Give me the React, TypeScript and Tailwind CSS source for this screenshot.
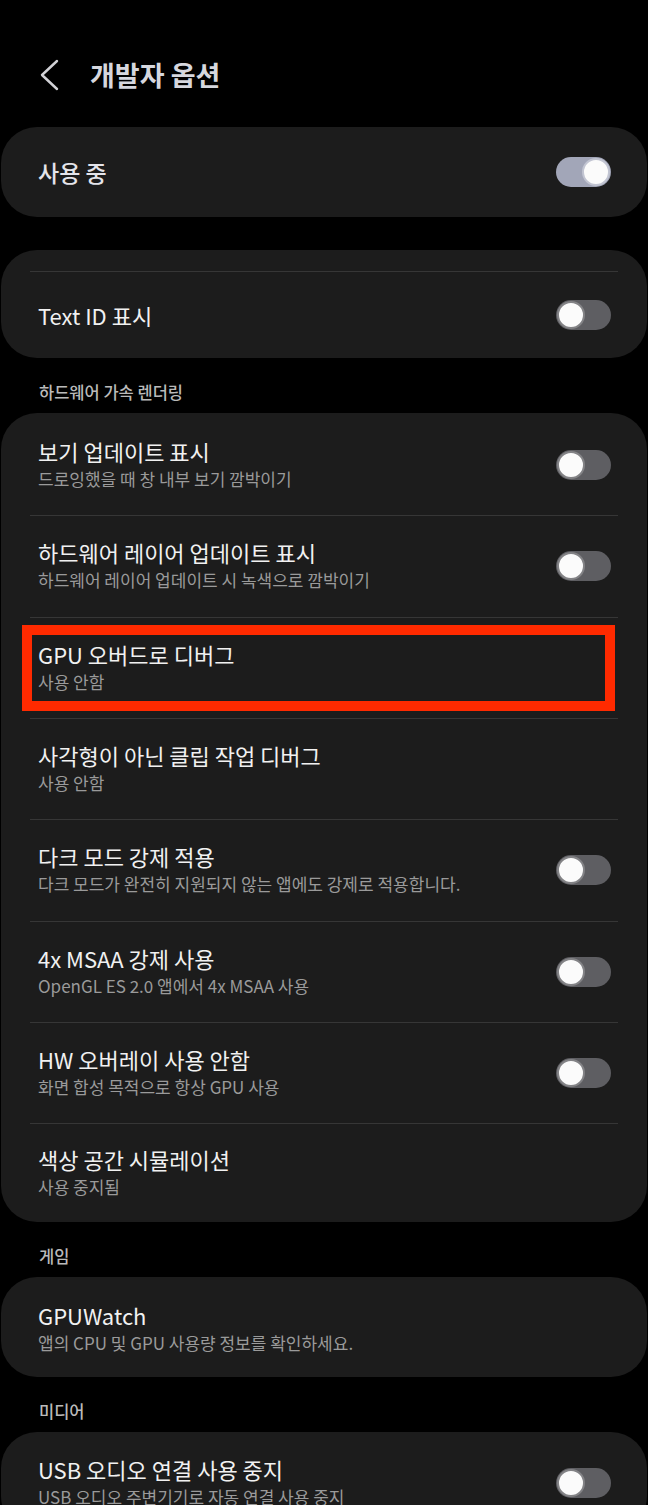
import React from "react";

type Row = {
  title: string;
  sub?: string;
  toggle?: boolean;
  highlight?: boolean;
};

const hwRows: Row[] = [
  { title: "보기 업데이트 표시", sub: "드로잉했을 때 창 내부 보기 깜박이기", toggle: true },
  { title: "하드웨어 레이어 업데이트 표시", sub: "하드웨어 레이어 업데이트 시 녹색으로 깜박이기", toggle: true },
  { title: "GPU 오버드로 디버그", sub: "사용 안함", highlight: true },
  { title: "사각형이 아닌 클립 작업 디버그", sub: "사용 안함" },
  { title: "다크 모드 강제 적용", sub: "다크 모드가 완전히 지원되지 않는 앱에도 강제로 적용합니다.", toggle: true },
  { title: "4x MSAA 강제 사용", sub: "OpenGL ES 2.0 앱에서 4x MSAA 사용", toggle: true },
  { title: "HW 오버레이 사용 안함", sub: "화면 합성 목적으로 항상 GPU 사용", toggle: true },
  { title: "색상 공간 시뮬레이션", sub: "사용 중지됨" },
];

const Toggle = ({ on = false }: { on?: boolean }) => (
  <div
    className={`flex h-[30px] w-[55px] shrink-0 items-center rounded-full px-[1px] ${
      on ? "justify-end bg-[#a2a6b8]" : "justify-start bg-[#5e5e62]"
    }`}
  >
    <div
      className={`h-[28px] w-[28px] rounded-full border-2 bg-[#fbfbfb] ${
        on ? "border-[#c2c5d2]" : "border-[#838386]"
      }`}
    />
  </div>
);

const Divider = () => <div className="mx-[29px] h-px bg-[#363636]" />;

const ItemText = ({ title, sub }: { title: string; sub?: string }) => (
  <div className="flex min-w-0 flex-col">
    <div className="whitespace-nowrap text-[22px] leading-[28px] text-[#f1f1f1]">{title}</div>
    {sub && (
      <div className="whitespace-nowrap text-[17px] leading-[28px] text-[#9a9a9a]">{sub}</div>
    )}
  </div>
);

const SectionLabel = ({ label }: { label: string }) => (
  <div className="h-[55px] pl-[38px] pt-[23px] text-[16.5px] font-medium leading-[22px] text-[#bababa]">
    {label}
  </div>
);

export default function App() {
  return (
    <div
      className="h-[1505px] w-[648px] overflow-hidden bg-black"
      style={{ fontFamily: '"Noto Sans CJK KR", "Noto Sans", sans-serif' }}
    >
      {/* header */}
      <div className="flex h-[127px] items-start gap-[30px] pl-[38px] pt-[52px]">
        <svg width="22" height="46" viewBox="0 0 22 46" fill="none">
          <path
            d="M19 9 L4 23 L19 37"
            stroke="#d2d2d6"
            strokeWidth="2.4"
            strokeLinecap="round"
            strokeLinejoin="round"
          />
        </svg>
        <div className="text-[27px] font-bold leading-[46px] text-[#d6d7de]">개발자 옵션</div>
      </div>

      <div className="flex flex-col px-[1px]">
        {/* master switch */}
        <div className="flex h-[90px] items-center justify-between rounded-[36px] bg-[#1c1c1c] pl-[37px] pr-[36px]">
          <div className="text-[23px] font-medium text-[#e4e4ea]">사용 중</div>
          <Toggle on />
        </div>

        <div className="h-[33px]" />

        <div className="flex flex-col rounded-[36px] bg-[#1c1c1c]">
          <div className="h-[21px]" />
          <Divider />
          <div className="flex h-[86px] items-center justify-between pl-[37px] pr-[36px]">
            <ItemText title="Text ID 표시" />
            <Toggle />
          </div>
        </div>

        <SectionLabel label="하드웨어 가속 렌더링" />

        <div className="flex flex-col rounded-[36px] bg-[#1c1c1c] pt-[2px]">
          {hwRows.map((row, i) => (
            <React.Fragment key={row.title}>
              {i > 0 && <Divider />}
              <div
                className={`relative flex items-center justify-between pl-[37px] pr-[36px] ${
                  i === hwRows.length - 1 ? "h-[98px]" : "h-[100.33px]"
                }`}
              >
                <ItemText title={row.title} sub={row.sub} />
                {row.toggle && <Toggle />}
                {row.highlight && (
                  <div className="absolute bottom-[7px] left-[21px] right-[32px] top-[7px] border-[10px] border-[#ff2a00]" />
                )}
              </div>
            </React.Fragment>
          ))}
        </div>

        <SectionLabel label="게임" />

        <div className="flex h-[100px] items-center rounded-[36px] bg-[#1c1c1c] pl-[37px] pr-[36px] pt-[4px]">
          <ItemText title="GPUWatch" sub="앱의 CPU 및 GPU 사용량 정보를 확인하세요." />
        </div>

        <SectionLabel label="미디어" />

        <div className="flex h-[100px] items-center justify-between rounded-[36px] bg-[#1c1c1c] pl-[37px] pr-[36px] pt-[2px]">
          <ItemText title="USB 오디오 연결 사용 중지" sub="USB 오디오 주변기기로 자동 연결 사용 중지" />
          <Toggle />
        </div>
      </div>
    </div>
  );
}
